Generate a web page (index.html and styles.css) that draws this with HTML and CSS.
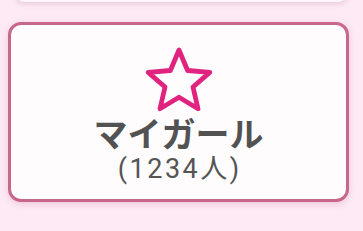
FILE: index.html
```html
<!DOCTYPE html>
<html lang="ja">
<head>
<meta charset="utf-8">
<link rel="stylesheet" href="styles.css">
</head>
<body>
<div class="prev-card"></div>
<div class="card">
  <svg class="star" viewBox="0 0 70 66" width="70" height="66">
    <polygon points="35,4 43.6,24.5 65.8,26.4 49,41 54,62.7 35,51.3 16,62.7 21,41 4.2,26.4 26.4,24.5" fill="none" stroke="#e0237f" stroke-width="4.8" stroke-linejoin="round"/>
  </svg>
  <div class="title">マイガール</div>
  <div class="count">(1234人)</div>
</div>
</body>
</html>
```
FILE: styles.css
```css
html, body {
  margin: 0;
  padding: 0;
}
body {
  width: 363px;
  height: 231px;
  overflow: hidden;
  background: #fdeaf4;
  font-family: Roboto, "Noto Sans CJK JP", sans-serif;
}
.prev-card {
  margin: -20px 14px 0 14px;
  height: 22px;
  border-radius: 12px;
  background: #fdf5f9;
  box-shadow: 0 2px 5px rgba(170, 110, 140, 0.25);
}
.card {
  box-sizing: border-box;
  margin: 20px 14px 0 8px;
  height: 180px;
  border: 3px solid #c8668c;
  border-radius: 13px;
  background: #fffcfe;
  box-shadow: 0 2px 6px rgba(200, 100, 140, 0.25);
  display: flex;
  flex-direction: column;
  align-items: center;
  padding-top: 21px;
}
.star {
  display: block;
}
.title {
  margin-top: 3px;
  font-family: "Noto Sans CJK JP", sans-serif;
  font-weight: 700;
  font-size: 34px;
  line-height: 36px;
  color: #525252;
}
.count {
  margin-top: 3px;
  padding-left: 2.5px;
  font-family: Roboto, "Noto Sans CJK JP", sans-serif;
  font-size: 27px;
  letter-spacing: 2.5px;
  line-height: 30px;
  color: #555;
}
```
